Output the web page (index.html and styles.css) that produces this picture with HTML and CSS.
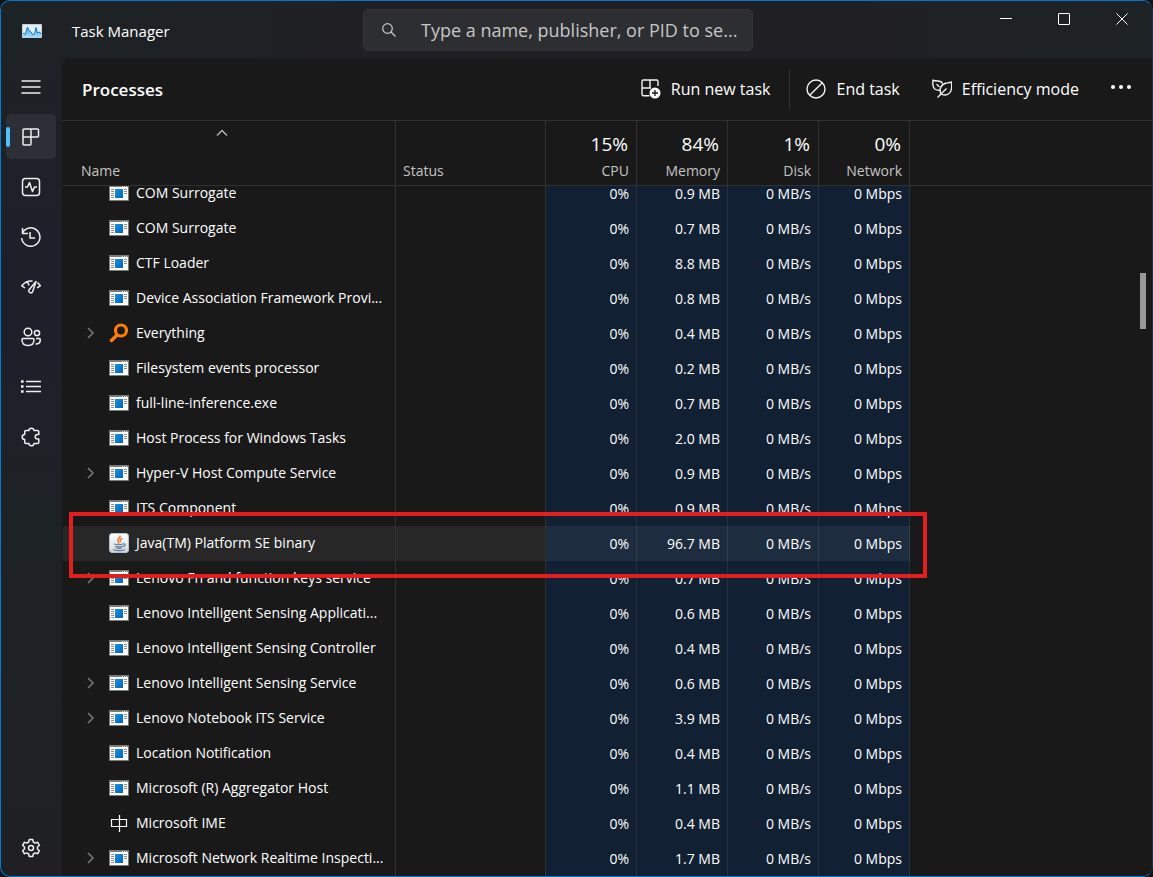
FILE: index.html
```
<!DOCTYPE html>
<html lang="en">
<head>
    <meta charset="UTF-8">
    <meta name="viewport" content="width=device-width, initial-scale=1.0">
    <title>Task Manager</title>
    <link rel="stylesheet" href="styles.css">
</head>
<body>
    <svg class="sprite" aria-hidden="true">
        <defs>
            <linearGradient id="blue" x1="0" y1="0" x2="1" y2="1">
                <stop offset="0" stop-color="#1394e4"/>
                <stop offset="1" stop-color="#0563b8"/>
            </linearGradient>
            <linearGradient id="chart" x1="0" y1="0" x2="0" y2="1">
                <stop offset="0" stop-color="#4aa8ec"/>
                <stop offset="1" stop-color="#9adcfc"/>
            </linearGradient>
            <linearGradient id="tile" x1="0" y1="0" x2="0" y2="1">
                <stop offset="0" stop-color="#ffffff"/>
                <stop offset="1" stop-color="#cfd6dc"/>
            </linearGradient>
        </defs>
        <symbol id="icon-app" viewBox="0 0 20 16">
            <path fill="#fff" stroke="#7a7a76" d="M.5.5h19v15H.5z"/>
            <path fill="#7a7a76" d="M0 0h20v2H0z"/>
            <path stroke="#d0d0d0" d="M13 1.500h1M15 1.500h1M17 1.500h1"/>
            <path stroke="#8c8c8c" d="M2 4.500h3M2 6.500h3M2 8.500h3M2 10.500h3M2 12.500h3M15 4.500h3M15 6.500h3M15 8.500h3"/>
            <path fill="url(#blue)" d="M6 4h8v9H6z"/>
        </symbol>
        <symbol id="icon-everything" viewBox="0 0 20 20">
            <circle cx="12" cy="7.500" r="5.500" fill="none" stroke="#ff7e00" stroke-width="3.200"/>
            <path stroke="#ff7e00" stroke-width="3.400" stroke-linecap="round" d="M7.500 12.500l-5 5"/>
        </symbol>
        <symbol id="icon-java" viewBox="0 0 20 20">
            <rect x=".5" y=".5" width="19" height="19" rx="2.500" fill="url(#tile)" stroke="#b8c2ca"/>
            <path fill="none" stroke="#ea7a2c" stroke-width="1.500" stroke-linecap="round" d="M11 3c1 2-3.500 3-2 5 .8 1 1.200 1.500.5 2.500M12.800 5.500c-2 1-2 2-1.300 3"/>
            <path fill="none" stroke="#5a7d9c" stroke-width="1.200" stroke-linecap="round" d="M5.500 11c2 .8 6 .8 8.500 0M6.500 13.200c2 .7 5 .7 6.800 0M7 15c2 .6 4 .6 5.500 0M4.500 16.800c3 1 8 1 11 0M14.500 11c2.500-.3 2 2-.3 2.500"/>
        </symbol>
        <symbol id="icon-ime" viewBox="0 0 20 20">
            <path fill="none" stroke="#fff" stroke-width="1.200" d="M2.500 6.500h15v7h-15zM10.500 2v17"/>
        </symbol>
        <symbol id="icon-chevron" viewBox="0 0 8 12">
            <path fill="none" stroke="#777" stroke-width="1.600" d="M1 1l5 5-5 5"/>
        </symbol>
    </svg>

    <div class="window">
        <header class="titlebar">
            <div class="brand">
                <svg width="20" height="14" viewBox="0 0 20 14">
                    <path fill="#e4edf4" stroke="#c5ced6" d="M.5.5h19v13H.5z"/>
                    <path fill="url(#chart)" d="M1 13V9l2 1.500L5.500 3 7 6.500l2 1.500 2 3 1.500-1L14 3.500 15.500 9l2-1 1.500 2v3z"/>
                    <path fill="none" stroke="#1878cc" d="M1 9l2 1.500L5.500 3 7 6.500l2 1.500 2 3 1.500-1L14 3.500 15.500 9l2-1 1.500 2"/>
                </svg>
                <span>Task Manager</span>
            </div>
            <label class="search">
                <svg width="14" height="14" viewBox="0 0 14 14"><circle cx="5.500" cy="5.500" r="4.800"/><path d="M9 9l4.500 4.500"/></svg>
                <input type="text" aria-label="Search" placeholder="Type a name, publisher, or PID to se...">
            </label>
            <div class="controls">
                <button aria-label="Minimize"><svg width="12" height="12" viewBox="0 0 12 12"><path d="M0 5.500h12"/></svg></button>
                <button aria-label="Maximize"><svg width="12" height="12" viewBox="0 0 12 12"><rect x=".5" y=".5" width="11" height="11" rx=".5"/></svg></button>
                <button aria-label="Close"><svg width="12" height="12" viewBox="0 0 12 12"><path d="M.5.5l11 11M11.500.5l-11 11"/></svg></button>
            </div>
        </header>

        <nav class="sidebar">
            <button class="nav-item" aria-label="Menu"><svg viewBox="0 0 20 20"><path stroke-width="1.300" d="M.5 4h19M.5 10h19M.5 16h19"/></svg></button>
            <button class="nav-item active" aria-label="Processes"><svg viewBox="0 0 20 20"><path d="M3 2h13.500a1 1 0 0 1 1 1v6a1 1 0 0 1-1 1H10v7a1 1 0 0 1-1 1H3a1 1 0 0 1-1-1V3a1 1 0 0 1 1-1zM10 2v8M2 10h8"/></svg></button>
            <button class="nav-item" aria-label="Performance"><svg viewBox="0 0 20 20"><rect x="1.500" y="1.500" width="17" height="17" rx="3"/><path d="M4 10h2.500L8.500 5.500l3 9 2-4.500H16"/></svg></button>
            <button class="nav-item" aria-label="App history"><svg viewBox="0 0 20 20"><path d="M1.500 1v5.500H7M1.500 6a9.200 9.200 0 1 1-.9 5M9 5v6h5"/></svg></button>
            <button class="nav-item" aria-label="Startup apps"><svg viewBox="0 0 20 20"><path d="M4 11L.8 8.800A12 12 0 0 1 11.500 4M16.500 5.500l2.800 3.300-3.300 2M6.500 4.500l1.500 4M15 4.500L11.700 14.500a2 2 0 0 1-3.800-1.500z"/></svg></button>
            <button class="nav-item" aria-label="Users"><svg viewBox="0 0 20 20"><circle cx="7" cy="5" r="3.800"/><circle cx="16" cy="6" r="2.600"/><path d="M2 11.500h10a1 1 0 0 1 1 1c0 4-2.500 6-6 6s-6-2-6-6a1 1 0 0 1 1-1zM15 11.500h3a1.300 1.300 0 0 1 1.300 1.300c0 3-1.800 4.400-4.800 4.200"/></svg></button>
            <button class="nav-item" aria-label="Details"><svg viewBox="0 0 20 20"><path d="M5 4.500h15M5 9.500h15M5 14.500h15"/><path stroke-width="2.600" d="M0 4.500h2.600M0 9.500h2.600M0 14.500h2.600"/></svg></button>
            <button class="nav-item" aria-label="Services"><svg viewBox="0 0 20 20"><path d="M5 3.500h3a2.500 2.300 0 0 1 5 0h3.500a1.300 1.300 0 0 1 1.300 1.300V7.500h-1.300a2.300 2.300 0 0 0 0 4.600h1.300v3.100a1.300 1.300 0 0 1-1.300 1.300H13a2.500 2.300 0 0 1-5 0H5a1.300 1.300 0 0 1-1.300-1.300V12.500a2.500 2.500 0 0 1 0-5V4.800A1.300 1.300 0 0 1 5 3.500z"/></svg></button>
            <button class="nav-item settings" aria-label="Settings"><svg viewBox="0 0 20 20"><circle cx="10" cy="10" r="2.500"/><path d="M8.300 1.500h3.400l.6 2.500 1.900 1.100 2.500-.8 1.700 3-1.900 1.700v2l1.900 1.700-1.700 3-2.500-.8-1.900 1.100-.6 2.500H8.300L7.700 16l-1.900-1.100-2.500.8-1.700-3L3.500 11V9L1.600 7.300l1.700-3 2.500.8L7.700 4z"/></svg></button>
        </nav>

        <main class="content">
            <div class="toolbar">
                <h1>Processes</h1>
                <button>
                    <svg width="20" height="20" viewBox="0 0 20 20"><path d="M8.500 16.700H2.500a1.500 1.500 0 0 1-1.500-1.500V2.500A1.500 1.500 0 0 1 2.500 1h13A1.500 1.500 0 0 1 17 2.500V7M9 1v8M1 9h9"/><circle cx="14" cy="14" r="5.500" fill="#fff" stroke="none"/><path class="plus" d="M14 11v6M11 14h6"/></svg>
                    Run new task
                </button>
                <span class="divider"></span>
                <button>
                    <svg width="20" height="20" viewBox="0 0 20 20"><circle cx="10" cy="10" r="9"/><path d="M3.700 16.300L16.300 3.700"/></svg>
                    End task
                </button>
                <button>
                    <svg width="20" height="20" viewBox="0 0 20 20"><path d="M10.500 4.500C9.500 2.500 8 2 6 2 4 2 2.500 2 1 1.200c-.2 1.800-.3 3.300 0 5.300.5 3 3 5 6.500 4.800M4.500 5.200L7.500 8M5.500 18.500l9-9M9 15c-2-4-.3-9.500 4.500-10.800 2-.5 4-.2 6-1.200.3 2 .3 4 .1 6C19.200 13 16.500 16 12.500 16c-1.500 0-2.500-.3-3.500-1z"/></svg>
                    Efficiency mode
                </button>
                <button aria-label="More options">
                    <svg width="20" height="20" viewBox="0 0 20 20"><g fill="#fff" stroke="none"><circle cx="2" cy="8" r="2"/><circle cx="10" cy="8" r="2"/><circle cx="18" cy="8" r="2"/></g></svg>
                </button>
            </div>

            <div class="list" id="list">
                <table>
                    <colgroup>
                        <col class="col-name">
                        <col class="col-status">
                        <col class="col-usage" span="4">
                        <col>
                    </colgroup>
                    <thead>
                        <tr>
                            <th class="name"><svg class="sort" width="12" height="8" viewBox="0 0 12 8"><path d="M1 6.500l5-5 5 5"/></svg>Name</th>
                            <th class="status">Status</th>
                            <th><span class="total">15%</span>CPU</th>
                            <th><span class="total">84%</span>Memory</th>
                            <th><span class="total">1%</span>Disk</th>
                            <th><span class="total">0%</span>Network</th>
                            <th class="rest"></th>
                        </tr>
                    </thead>
                    <tbody id="rows"></tbody>
                </table>
            </div>
            <div class="scroll-thumb"></div>
        </main>
    </div>

    <script>
        // name, memory, options
        const processes = [
            ["COM Surrogate", "0.9"],
            ["COM Surrogate", "0.7"],
            ["CTF Loader", "8.8"],
            ["Device Association Framework Provi...", "0.8"],
            ["Everything", "0.4", { group: true, icon: "everything" }],
            ["Filesystem events processor", "0.2"],
            ["full-line-inference.exe", "0.7"],
            ["Host Process for Windows Tasks", "2.0"],
            ["Hyper-V Host Compute Service", "0.9", { group: true }],
            ["ITS Component", "0.9"],
            ["Java(TM) Platform SE binary", "96.7", { icon: "java", marked: true }],
            ["Lenovo Fn and function keys service", "0.7", { group: true }],
            ["Lenovo Intelligent Sensing Applicati...", "0.6"],
            ["Lenovo Intelligent Sensing Controller", "0.4"],
            ["Lenovo Intelligent Sensing Service", "0.6", { group: true }],
            ["Lenovo Notebook ITS Service", "3.9", { group: true }],
            ["Location Notification", "0.4"],
            ["Microsoft (R) Aggregator Host", "1.1"],
            ["Microsoft IME", "0.4", { icon: "ime" }],
            ["Microsoft Network Realtime Inspecti...", "1.7", { group: true }]
        ];

        document.getElementById("rows").innerHTML = processes.map(([name, memory, opt = {}]) => `
            <tr class="${opt.marked ? "marked" : ""}">
                <td class="name"><div class="process">
                    <span class="expand">${opt.group ? '<svg width="8" height="12"><use href="#icon-chevron"/></svg>' : ""}</span>
                    <svg width="20" height="${opt.icon ? 20 : 16}"><use href="#icon-${opt.icon || "app"}"/></svg>
                    <span>${name}</span>
                </div>${opt.marked ? '<div class="mark"></div>' : ""}</td>
                <td class="status"></td>
                <td class="usage">0%</td>
                <td class="usage">${memory} MB</td>
                <td class="usage">0 MB/s</td>
                <td class="usage">0 Mbps</td>
                <td class="rest"></td>
            </tr>`).join("");

        document.getElementById("list").scrollTop = 10;
    </script>
</body>
</html>
```
FILE: styles.css
```
* { box-sizing: border-box; }
body { margin: 0; background: #111; color: #fff; font-family: "Open Sans", "Noto Sans", sans-serif; font-size: 14px; }
button { display: flex; align-items: center; justify-content: center; padding: 0; border: none; background: none; color: inherit; font: inherit; }
svg { flex: none; }
.sprite { position: absolute; width: 0; height: 0; }

.window { display: grid; grid-template-columns: 61px minmax(0, 1fr); grid-template-rows: 57px minmax(0, 1fr); height: 100vh; border: 1px solid #0078d4; border-right-color: #16324a; border-radius: 10px; overflow: hidden; background: linear-gradient(#1d2225, #1e2029 30%, #1e2029 40%, #1d2225 60%, #202024); }

/* title bar */
.titlebar { grid-column: 1 / 3; display: grid; grid-template-columns: minmax(0, 362px) minmax(0, 390px) 1fr; background: linear-gradient(90deg, #1d2225, #202024 30%, #202024 75%, #1d2225); }
.brand { display: flex; align-items: center; gap: 30px; padding: 2px 0 0 21px; font-size: 15px; white-space: nowrap; }
.search { display: flex; align-items: center; gap: 25px; height: 42px; margin-top: 8px; padding: 0 10px 0 18px; border: 1px solid #343538; border-radius: 5px; background: #2d2e31; }
.search svg { fill: none; stroke: #c8c8c8; stroke-width: 1.2; }
.search input { flex: 1; min-width: 0; padding: 0; border: none; outline: none; background: none; color: #fff; font: inherit; font-size: 18px; }
.search input::placeholder { color: #c6c6c6; opacity: 1; }
.controls { display: flex; justify-content: flex-end; padding-right: 1px; }
.controls button { width: 58px; height: 36px; }
.controls svg { fill: none; stroke: #fff; }

/* navigation */
.sidebar { display: flex; flex-direction: column; gap: 5px; padding: 6px 5px; }
.nav-item { position: relative; width: 50px; height: 45px; border-radius: 5px; }
.nav-item svg { width: 20px; height: 20px; fill: none; stroke: #eee; stroke-width: 1.5; stroke-linejoin: round; }
.nav-item.active { background: #2d2f37; }
.nav-item.active::before { content: ""; position: absolute; left: 0; top: 13px; width: 4px; height: 20px; border-radius: 2px; background: #4cc2ff; }
.settings { margin-top: auto; }

/* toolbar */
.content { position: relative; display: flex; flex-direction: column; min-width: 0; border-top-left-radius: 8px; background: #191919; }
.toolbar { display: flex; align-items: center; height: 63px; padding: 0 5px 0 20px; border-bottom: 1px solid #303030; }
.toolbar h1 { margin: 0 auto 0 0; font-size: 17px; font-weight: 600; }
.toolbar button { gap: 10px; height: 40px; padding: 0 16px; font-size: 16px; white-space: nowrap; }
.toolbar svg { fill: none; stroke: #f2f2f2; stroke-width: 1.4; stroke-linejoin: round; }
.toolbar .plus { stroke: #191919; stroke-width: 1.3; }
.divider { width: 1px; height: 40px; margin-left: 3px; background: #303030; }

/* process list */
.list { flex: 1; min-height: 0; padding-left: 1px; overflow: hidden; }
table { width: 100%; table-layout: fixed; border-collapse: separate; border-spacing: 0; }
.col-name { width: 333px; }
.col-status { width: 150px; }
.col-usage { width: 91px; }
th { position: sticky; top: 0; z-index: 1; height: 65px; padding: 0 7px 4px; border-right: 1px solid #303030; border-bottom: 1px solid #303030; background: #191919; color: #c4c4c4; font-weight: normal; line-height: 20px; text-align: right; vertical-align: bottom; }
th.name { padding-left: 18px; text-align: left; }
th.status { text-align: left; }
.total { display: block; margin-bottom: 5px; padding-right: 1px; color: #fff; font-size: 19px; line-height: 24px; }
.sort { display: block; margin: 0 auto 24px 135px; fill: none; stroke: #bbb; stroke-width: 1.3; }
td { height: 35px; padding: 0 7px 1px; border-right: 1px solid #303030; text-align: right; white-space: nowrap; }
td.name { padding: 0 0 2px 24px; text-align: left; }
td.usage { border-right-color: #26313f; background: #122033; }
th.rest, td.rest { border-right: none; }
.process { display: flex; align-items: center; gap: 7px; }
.expand { width: 15px; line-height: 0; }
.marked { position: relative; }
.marked td { background: #272727; }
.marked td.usage { border-right-color: #343f4c; background: #1e2c3f; }
.marked td.rest { background: none; }
.mark { position: absolute; z-index: 1; top: -14px; left: 6px; width: 858px; height: 66px; border: 4px solid #e31e1e; }
.scroll-thumb { position: absolute; right: 6px; top: 215px; width: 6px; height: 56px; background: #999; }
```
